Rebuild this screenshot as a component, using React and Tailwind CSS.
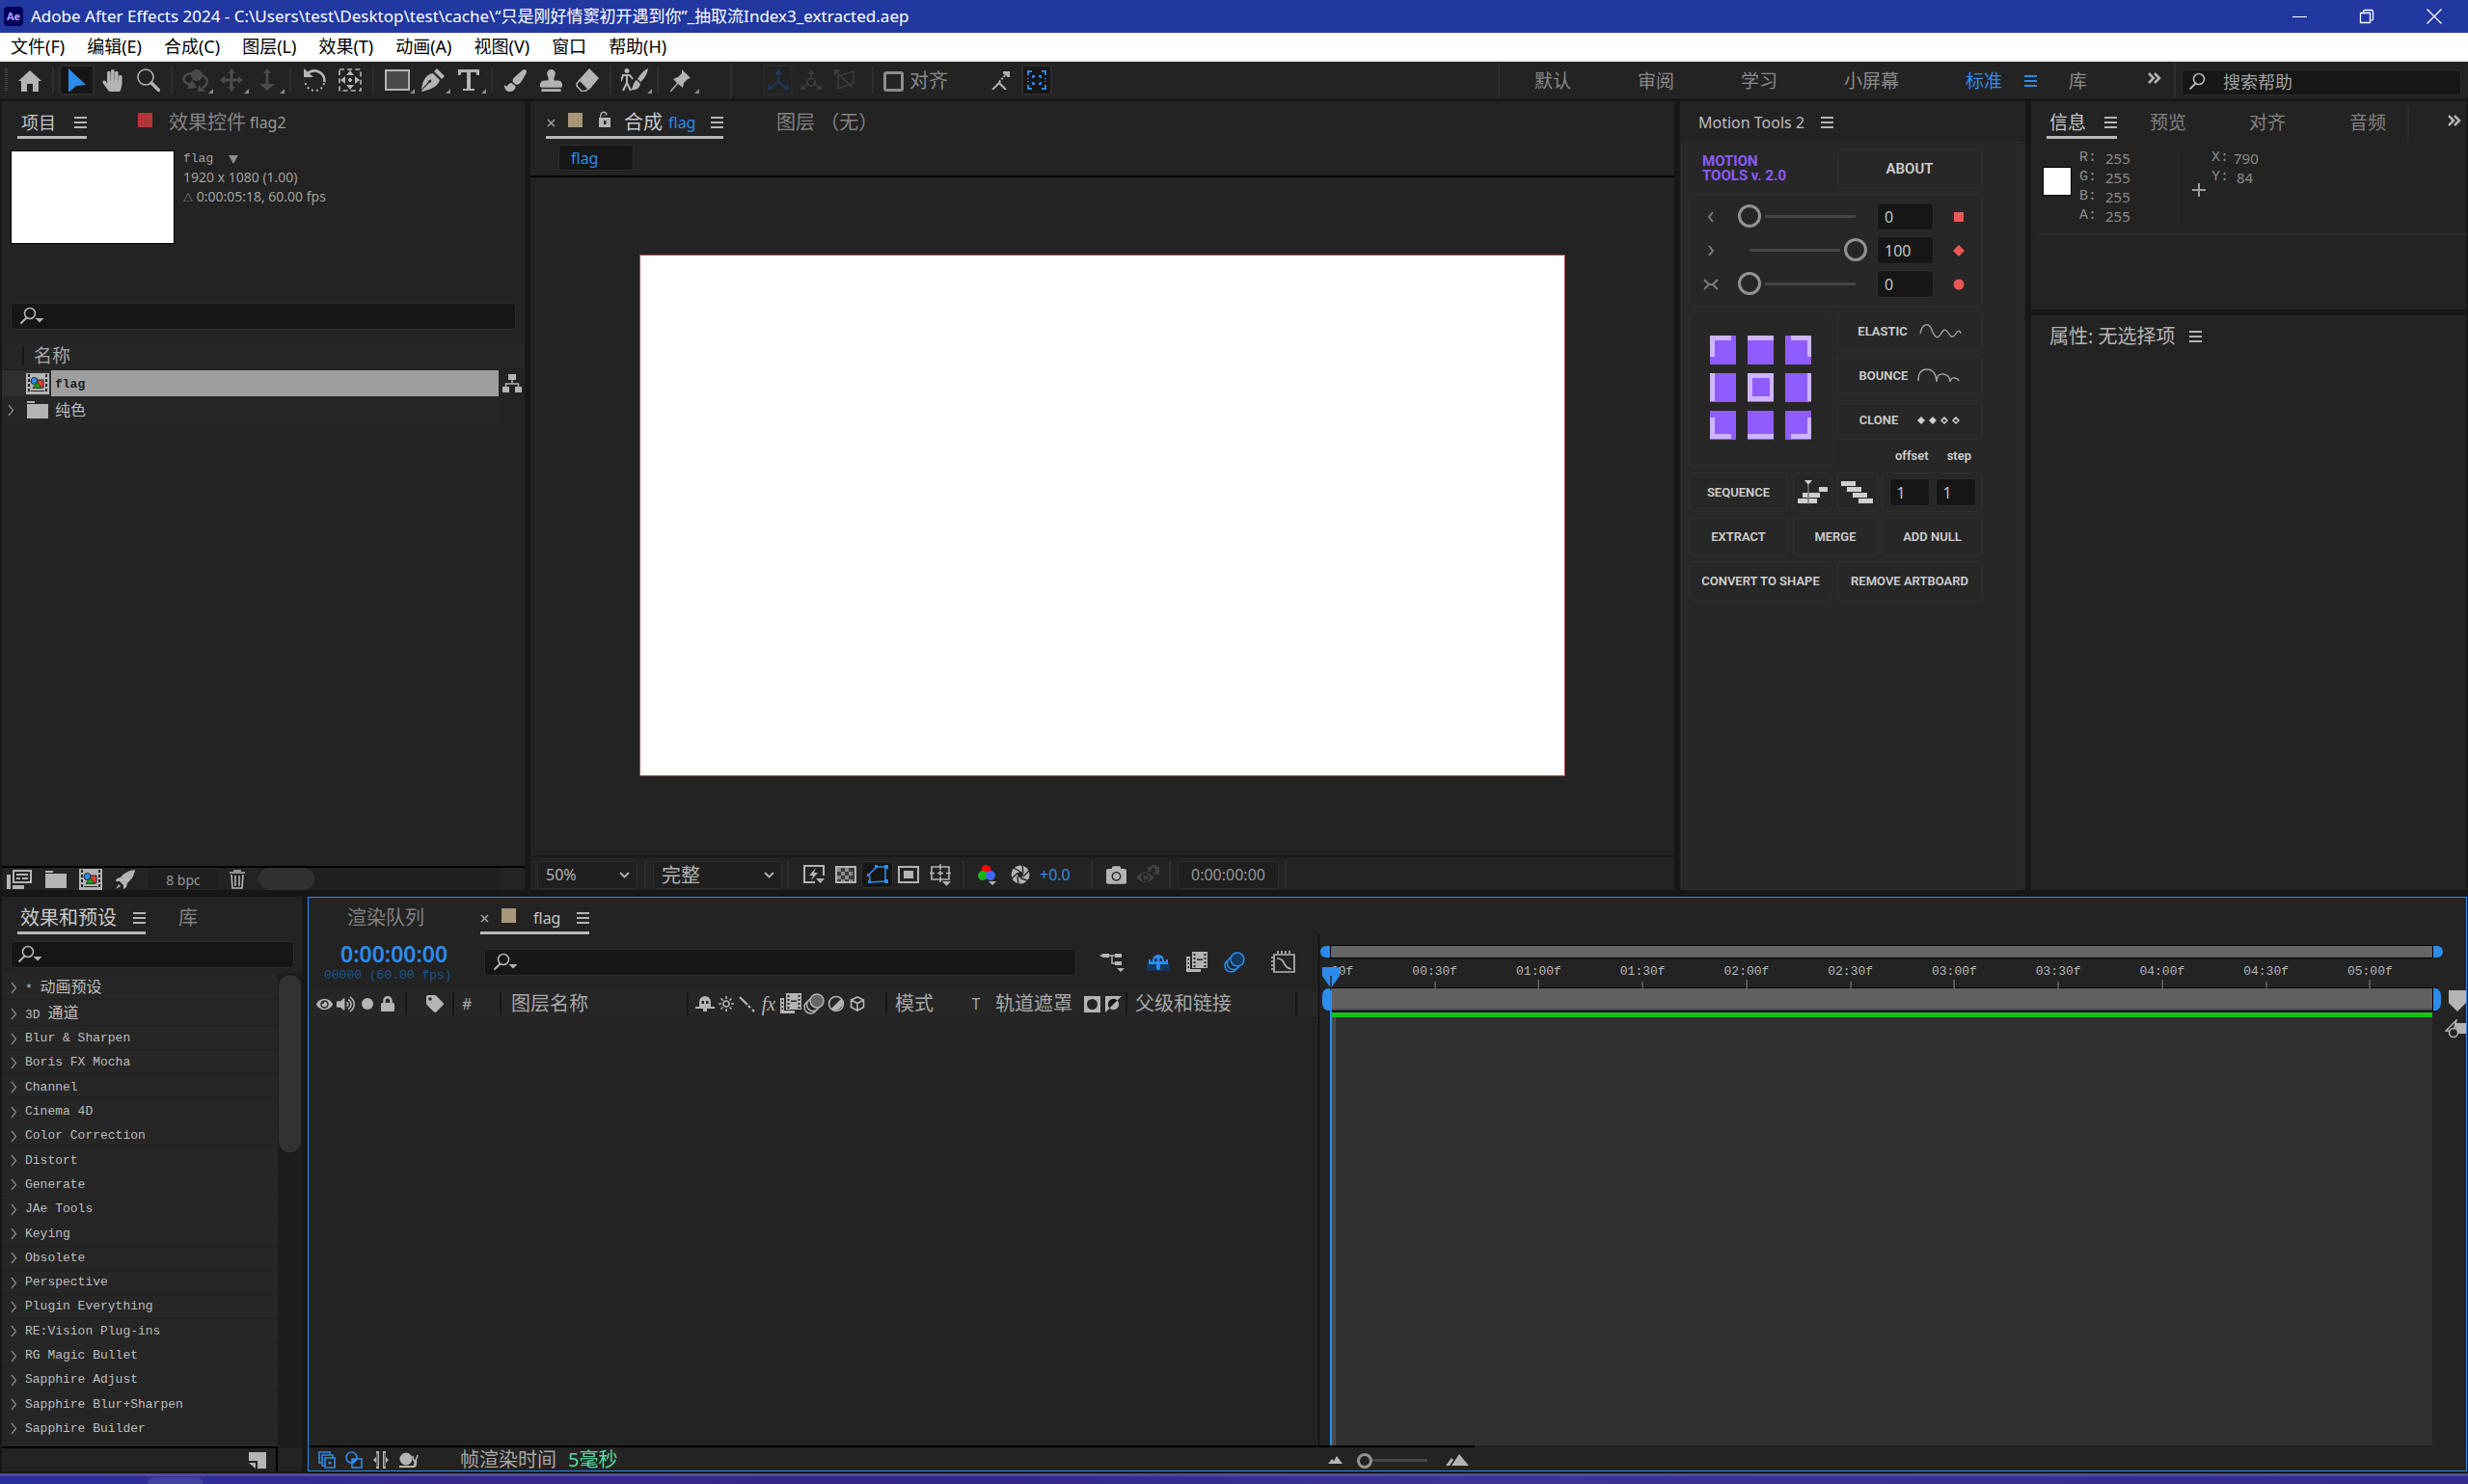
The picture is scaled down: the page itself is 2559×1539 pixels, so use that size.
import React from 'react';
import { FaHandPaper, FaStamp, FaPaintBrush, FaCamera, FaLock, FaTag, FaVolumeUp, FaEye } from 'react-icons/fa';

const Svg = ({ w = 24, h = 24, className = "", children }) => (
    <svg width={w} height={h} viewBox={`0 0 ${w} ${h}`} className={`shrink-0 ${className}`} fill="currentColor" aria-hidden="true">
        {children}
    </svg>
);

const Lines = ({ className = "text-[#b4b4b4]" }) => (
    <Svg w={13} h={12} className={className}>
        <path d="M0 0h13v2H0zM0 5h13v2H0zM0 10h13v2H0z" />
    </Svg>
);

const Chevrons = () => (
    <Svg w={16} h={14} className="text-[#b4b4b4]">
        <path d="M2 2l5 5-5 5M8 2l5 5-5 5" fill="none" stroke="currentColor" strokeWidth="2.5" />
    </Svg>
);

const Caret = () => (
    <Svg w={7} h={13} className="text-[#8c8c8c]">
        <path d="M1 1l4.500 5.500L1 12" fill="none" stroke="currentColor" strokeWidth="1.200" />
    </Svg>
);

const SearchIcon = ({ arrow = true }) => (
    <Svg w={26} h={20} className="text-[#b4b4b4]">
        <circle cx="11" cy="7" r="5.500" fill="none" stroke="currentColor" strokeWidth="1.600" />
        <path d="M7.500 11.500L1.500 17.500" stroke="currentColor" strokeWidth="2" />
        {arrow && <path d="M16.500 12h9l-4.500 4.500z" />}
    </Svg>
);

const CompIcon = () => (
    <Svg w={24} h={22}>
        <path d="M0 0h24v22H0z" fill="#b4b4b4" />
        <path d="M2 1h2v3H2zM2 6h2v3H2zM2 11h2v3H2zM2 16h2v3H2zM20 1h2v3h-2zM20 6h2v3h-2zM20 11h2v3h-2zM20 16h2v3h-2zM5 18h14v1H5z" fill="#232323" />
        <path d="M11 7h7v8h-7z" fill="#f23b3b" stroke="#232323" />
        <circle cx="8.500" cy="8" r="3.500" fill="#2d8ceb" stroke="#232323" />
        <path d="M11.500 8.500l4.500 7H7z" fill="#129c12" stroke="#232323" strokeWidth=".8" />
    </Svg>
);

const FolderIcon = () => (
    <Svg w={22} h={18} className="text-[#b4b4b4]">
        <path d="M0 0h8v2H0zM0 3h22v15H0z" />
    </Svg>
);

const Film = () => (
    <Svg w={22} h={22}>
        <path d="M6 0h16v17H6zM0 5h4v13h11v3H0z" />
        <path d="M7.500 2h2v2h-2zM7.500 6h2v2h-2zM7.500 10h2v2h-2zM7.500 14h2v2h-2zM18.500 2h2v2h-2zM18.500 6h2v2h-2zM18.500 10h2v2h-2zM18.500 14h2v2h-2zM11 7.500h6v1.500h-6zM1.500 7H3v2H1.500zM1.500 11H3v2H1.500zM1.500 15H3v2H1.500z" fill="#232323" />
    </Svg>
);

const Blur = ({ fill = "#666" }) => (
    <Svg w={22} h={22}>
        <g fill="#232323" stroke="currentColor" strokeWidth="1.500">
            <circle cx="7.500" cy="14.500" r="6.500" />
            <circle cx="10" cy="12" r="6.500" />
            <circle cx="14" cy="8" r="7" fill={fill} />
        </g>
    </Svg>
);

const Shy = () => (
    <Svg w={24} h={18}>
        <path d="M6 7a6 6 0 0 1 12 0v1H6zM2 6h2v2h16V6h2v5h-8v5q-2 2-4 0v-5H2z" />
        <path d="M8 5h2.500v3H8zM13.500 5H16v3h-2.500z" fill="#1b2a3c" />
    </Svg>
);

const toolGroups = [
    [
        { name: 'Home', icon: <Svg><path d="M12 2L0 13h3v11h6v-8h6v8h6V13h3z" /></Svg> },
    ],
    [
        { name: 'Selection', active: true, icon: <Svg className="text-[#2d8ceb]"><path d="M3 0l18 17-10 1-8 7z" /></Svg> },
        { name: 'Hand', icon: <FaHandPaper size={23} /> },
        {
            name: 'Zoom', icon: (
                <Svg>
                    <circle cx="9" cy="9" r="8" fill="none" stroke="currentColor" strokeWidth="1.500" />
                    <path d="M15 15l7.500 7.500" stroke="currentColor" strokeWidth="3.500" strokeLinecap="round" />
                </Svg>
            )
        },
    ],
    [
        {
            name: 'Orbit', dim: true, sub: true, icon: (
                <Svg w={28}>
                    <circle cx="15" cy="7" r="6" />
                    <path d="M10 5C0 6-1 13 6 16l5 2M20 7c8 3 7 10 1 13" fill="none" stroke="currentColor" strokeWidth="2.500" />
                    <path d="M5 21l10-1-5-8zM24 24h-8l1-7z" />
                </Svg>
            )
        },
        { name: 'Pan', dim: true, sub: true, icon: <Svg><path d="M12 0l4 5h-2.500v5.500H19V8l5 4-5 4v-2.500h-5.500V19H16l-4 5-4-5h2.500v-5.500H5V16l-5-4 5-4v2.500h5.500V5H8z" /></Svg> },
        { name: 'Dolly', dim: true, sub: true, icon: <Svg w={16}><path d="M8 0l4 5H9.500v11H16l-8 7-8-7h6.500V5H4z" /></Svg> },
    ],
    [
        {
            name: 'Rotate', icon: (
                <Svg>
                    <path d="M4 6C11-1 23 3 22.500 14" fill="none" stroke="currentColor" strokeWidth="2.500" />
                    <path d="M1 0v9h10z" />
                    <path d="M22 15C20 26 3 26 2 12" fill="none" stroke="currentColor" strokeWidth="2" strokeDasharray="2 3" />
                </Svg>
            )
        },
        {
            name: 'Anchor', icon: (
                <Svg>
                    <path d="M1 1h22v22H1z" fill="none" stroke="currentColor" strokeWidth="1.600" strokeDasharray="5 3.200" />
                    <path d="M12 2l4 5H8zM12 22l4-5H8zM2 12l5-4v8zM22 12l-5-4v8z" />
                    <path d="M10 11h1v-1h2v1h1v2h-1v1h-2v-1h-1z" />
                </Svg>
            )
        },
    ],
    [
        { name: 'Rectangle', sub: true, icon: <Svg w={26}><path d="M1 2h24v20H1z" fill="#4a4a4a" stroke="#b4b4b4" strokeWidth="2" /></Svg> },
        {
            name: 'Pen', sub: true, icon: (
                <Svg>
                    <path d="M16 0l8 8-3 3-8-8zM12 5l7 7c-2 6-7 9-18 12l-1-1L8 15c1 0 3-1 2-3-2-1-3 1-3 2L0 22C1 12 5 6 12 5z" />
                </Svg>
            )
        },
        { name: 'Text', sub: true, icon: <Svg w={22}><path d="M0 1h22v6h-2.500l-1-3H13v17h4v2H5v-2h4V4H3.500l-1 3H0z" /></Svg> },
    ],
    [
        { name: 'Brush', icon: <FaPaintBrush size={23} /> },
        { name: 'Stamp', icon: <FaStamp size={23} /> },
        {
            name: 'Eraser', icon: (
                <Svg>
                    <path d="M14 0l10 10-10 12L4 11z" />
                    <path d="M4 12l9 9-3 2.500H6L1 18v-2z" fill="none" stroke="currentColor" strokeWidth="1.500" />
                </Svg>
            )
        },
    ],
    [
        {
            name: 'Roto', sub: true, icon: (
                <Svg w={28}>
                    <circle cx="6" cy="2.500" r="2.500" />
                    <path d="M6 6v9l-4 8M6 15l4 8M0 13l2-6h7l3 4" fill="none" stroke="currentColor" strokeWidth="2" />
                    <path d="M28 0c-1 6-4 11-8 14l-3-3c3-5 6-9 11-11zM16 12l4 4c-1 5-5 7-10 6 3-2 2-8 6-10z" />
                </Svg>
            )
        },
    ],
    [
        { name: 'Puppet pin', sub: true, icon: <Svg><path d="M12 1l9 9-3 1-4 4-1 5-5-4-7 8H0v-1l7-8-4-4 5-2 4-4z" /></Svg> },
    ],
];

const Sep = ({ className = "" }) => <div className={`w-[2px] h-7 bg-[#2e2e2e] shrink-0 ${className}`}></div>;

const menus = ['文件(F)', '编辑(E)', '合成(C)', '图层(L)', '效果(T)', '动画(A)', '视图(V)', '窗口', '帮助(H)'];

const TitleBar = () => (
    <header>
        <div className="h-[34px] bg-[#2038a0] flex items-center text-white">
            <div className="w-5 h-5 ml-1 rounded bg-[#00005b] text-[#b3a0ff] text-[11px] font-bold flex items-center justify-center">Ae</div>
            <h1 className="ml-2 text-[17px] leading-6 flex-1 whitespace-nowrap">Adobe After Effects 2024 - C:\Users\test\Desktop\test\cache\“只是刚好情窦初开遇到你”_抽取流Index3_extracted.aep</h1>
            <div className="flex">
                <button aria-label="Minimize" className="w-[70px] h-8 flex items-center justify-center">
                    <Svg w={15} h={15}><path d="M0 7h15v1H0z" /></Svg>
                </button>
                <button aria-label="Restore" className="w-[70px] h-8 flex items-center justify-center">
                    <Svg w={16} h={16}>
                        <path d="M1.500 4.500h10v10h-10zM4.500 4.500V3q0-1.500 1.500-1.500h7q1.500 0 1.500 1.500v8q0 1-2 1" fill="none" stroke="currentColor" strokeWidth="1.300" />
                    </Svg>
                </button>
                <button aria-label="Close" className="w-[70px] h-8 flex items-center justify-center">
                    <Svg w={16} h={16}><path d="M.5.500l15 15M15.500.500l-15 15" stroke="currentColor" strokeWidth="1.300" /></Svg>
                </button>
            </div>
        </div>
        <nav className="h-[30px] bg-white border-b-2 border-[#efefef] flex items-center gap-[23px] pl-[11px] text-lg leading-6 text-black">
            {menus.map((m) => <button key={m} className="whitespace-nowrap">{m}</button>)}
        </nav>
    </header>
);

const Toolbar = () => (
    <div className="h-[38px] bg-[#232323] flex items-center text-[#b4b4b4]">
        <div className="w-[3px] h-6 ml-[5px] mr-1 bg-[repeating-linear-gradient(#4a4a4a_0_1px,transparent_1px_2px)]"></div>
        {toolGroups.map((group, i) => (
            <React.Fragment key={i}>
                {i > 0 && <Sep className="mx-[5px]" />}
                {group.map((t) => (
                    <button
                        key={t.name}
                        aria-label={t.name}
                        className={`relative w-[37px] h-8 shrink-0 flex items-center justify-center rounded ${t.active ? "bg-[#161616] border-2 border-[#2c2c2c]" : ""} ${t.dim ? "text-[#4b4b4b]" : ""}`}
                    >
                        {t.icon}
                        {t.sub && <Svg w={5} h={5} className="absolute right-0 bottom-0.5 text-[#8c8c8c]"><path d="M5 0v5H0z" /></Svg>}
                    </button>
                ))}
            </React.Fragment>
        ))}
        <Sep className="ml-8 h-[38px]" />
        <div className="flex items-center ml-8 text-[#3c3c3c]">
            <button aria-label="Local axis" className="w-[31px] h-8 border-2 border-[#292929] rounded flex items-center justify-center text-[#1e3a5c]">
                <Svg w={22} h={22}><path d="M11 3v10L2 20M11 13l9 7" fill="none" stroke="currentColor" strokeWidth="1.800" /><path d="M11 0l4 5H7zM0 21l1-6 5 6zM22 21l-1-6-5 6z" /></Svg>
            </button>
            <button aria-label="World axis" className="w-[37px] h-8 flex items-center justify-center">
                <Svg w={22} h={22}><path d="M11 3v7M8 15l-6 4M14 15l6 4" fill="none" stroke="currentColor" strokeWidth="1.800" /><circle cx="11" cy="13" r="4" fill="none" stroke="currentColor" strokeWidth="1.800" /><path d="M11 0l4 5H7zM0 21l1-6 5 6zM22 21l-1-6-5 6z" /></Svg>
            </button>
            <button aria-label="View axis" className="w-[33px] h-8 flex items-center justify-center">
                <Svg w={22} h={22}><path d="M4 7l16-5v12L4 20zM2 2l17 17" fill="none" stroke="currentColor" strokeWidth="1.600" /><path d="M0 0h7L0 7z" /></Svg>
            </button>
        </div>
        <Sep className="ml-3 mr-2.5" />
        <label className="flex items-center gap-1.5 pt-0.5 text-xl leading-6 text-[#8a8a8a]">
            <input type="checkbox" className="appearance-none w-[21px] h-[21px] border-[3px] border-[#8c8c8c] rounded-[3px]" />
            对齐
        </label>
        <button aria-label="Snap edges" className="ml-[38px] w-[34px] h-8 flex items-center justify-center">
            <Svg w={20} h={20}><path d="M1 20l7-7 7 7" fill="none" stroke="currentColor" strokeWidth="2" /><path d="M8 12l8-9" stroke="currentColor" strokeWidth="2" strokeDasharray="2 1.500" /><path d="M12 1h7v6h-2l-5-4z" /></Svg>
        </button>
        <button aria-label="Snap features" className="ml-1 w-8 h-8 rounded bg-[#161616] border-2 border-[#2c2c2c] flex items-center justify-center text-[#2d8ceb]">
            <Svg w={20} h={20}><path d="M1 5V1h4M15 1h4v4M19 15v4h-4M5 19H1v-4" fill="none" stroke="currentColor" strokeWidth="1.800" /><path d="M1 8v1M1 11v1M19 8v1M19 11v1M6 8V6h2M12 6h2v2M14 12v2h-2M8 14H6v-2" fill="none" stroke="currentColor" strokeWidth="1.800" /></Svg>
        </button>
        <div className="ml-auto flex items-center text-[19px] leading-6 text-[#8a8a8a]">
            <Sep className="h-[38px] mr-9" />
            <div className="flex items-center gap-[69px] pt-0.5">
                <button>默认</button>
                <button>审阅</button>
                <button>学习</button>
                <button>小屏幕</button>
                <button className="text-[#2d8ceb] -mr-[46px]">标准</button>
                <Lines className="text-[#2d8ceb]" />
                <button className="-ml-9">库</button>
            </div>
            <button aria-label="More workspaces" className="ml-[62px] -mt-1"><Chevrons /></button>
            <Sep className="h-[38px] ml-3 mr-1.5" />
            <div className="w-[290px] h-[27px] mr-[7px] mt-1 rounded bg-[#161616] border border-[#2c2c2c] flex items-center pl-1.5">
                <SearchIcon arrow={false} />
                <input aria-label="搜索帮助" placeholder="搜索帮助" className="ml-2.5 flex-1 min-w-0 bg-transparent text-lg leading-6 placeholder:text-[#a0a0a0] outline-none" />
            </div>
        </div>
    </div>
);

const Tab = ({ active, className = "", children }) => (
    <button className={`h-[39px] pt-2 border-b-[3px] flex items-center whitespace-nowrap ${active ? "border-[#b9b9b9] text-[#c8c8c8]" : "border-transparent text-[#828282]"} ${className}`}>
        {children}
    </button>
);

const ProjectPanel = () => (
    <section className="w-[542px] shrink-0 bg-[#232323] flex flex-col">
        <div className="flex pl-4 text-xl leading-6">
            <Tab active className="w-[72px] pl-1 text-lg">项目<Lines className="ml-auto text-[#b4b4b4]" /></Tab>
            <Tab className="ml-[53px]">
                <span className="w-[15px] h-[15px] -mt-1.5 mr-[17px] bg-[#b23737]"></span>
                效果控件<span className="ml-1 text-base leading-6 text-[#9a9a9a]">flag2</span>
            </Tab>
        </div>
        <div className="flex mt-3 ml-[9px]">
            <div className="w-[170px] h-[97px] bg-white border border-black"></div>
            <div className="ml-[9px] text-sm leading-5 text-[#a0a0a0]">
                <div className="h-[18px] flex items-center gap-4 text-[13px] font-[Liberation_Mono]">
                    flag
                    <Svg w={10} h={9} className="text-[#8c8c8c]"><path d="M0 0h10L5 9z" /></Svg>
                </div>
                <div>1920 x 1080 (1.00)</div>
                <div><span className="text-[10px]">△</span> 0:00:05:18, 60.00 fps</div>
            </div>
        </div>
        <label className="mt-[61px] mx-[9px] h-7 rounded bg-[#161616] border border-[#2c2c2c] flex items-center pl-2">
            <SearchIcon />
            <input aria-label="Search project" className="flex-1 bg-transparent outline-none" />
        </label>
        <table className="mt-3 w-full text-left">
            <thead>
                <tr className="bg-[#262626] h-7 border-y-2 border-[#212121]">
                    <th colSpan="3" className="p-0 font-normal text-[19px] leading-6 text-[#a8a8a8]">
                        <div className="ml-[21px] pl-2.5 border-l-2 border-[#161616] h-5 flex items-center">名称</div>
                    </th>
                </tr>
            </thead>
            <tbody>
                <tr className="h-7">
                    <td className="p-0 w-[51px] bg-[#2f2f2f]"><div className="pl-[25px] flex"><CompIcon /></div></td>
                    <td className="p-0 pl-1 pt-0.5 bg-[#9e9e9e] text-[#1a1a1a] font-bold text-[13px] font-[Liberation_Mono]">flag</td>
                    <td className="p-0 w-[27px] text-[#b4b4b4]">
                        <Svg w={20} h={20} className="mx-auto"><path d="M6 0h8v6H6zM0 13h7v6H0zM13 13h7v6h-7z" /><path d="M10 6v4M3.500 13v-3h13v3" fill="none" stroke="currentColor" strokeWidth="1.500" /></Svg>
                    </td>
                </tr>
                <tr className="h-7 bg-[#262626]">
                    <td className="p-0"><div className="pl-1.5 flex items-center gap-[13px]"><Caret /><FolderIcon /></div></td>
                    <td className="p-0 pl-1 text-base leading-5 text-[#bdbdbd]">纯色</td>
                    <td className="bg-[#232323]"></td>
                </tr>
            </tbody>
        </table>
        <div className="mt-auto h-[25px] border-t-2 border-black flex items-center text-[#b4b4b4]">
            <button aria-label="Interpret footage" className="ml-[5px]">
                <Svg w={26} h={20}><path d="M7 1h18v12H7z" fill="none" stroke="currentColor" strokeWidth="2" /><path d="M10 4h12v2H10zM10 8h4v2h-4zM16 8h6v2h-6zM0 5h4v15H0zM6 16h12v4H6z" /></Svg>
            </button>
            <button aria-label="New folder" className="ml-3.5"><FolderIcon /></button>
            <button aria-label="New composition" className="ml-[13px]"><CompIcon /></button>
            <button aria-label="Project settings" className="ml-3.5">
                <Svg w={20} h={20}><path d="M20 0c-8 1-12 4-15 8L1 9l-1 3h4l4 4v4l3-2 1-4c4-4 7-7 8-14zM3 15l-3 5 5-3z" /></Svg>
            </button>
            <button className="ml-3 w-[76px] h-[23px] pt-0.5 rounded border border-[#2a2a2a] bg-[#1f1f1f] text-sm leading-5 text-[#969696]">8 bpc</button>
            <button aria-label="Delete" className="ml-2.5">
                <Svg w={16} h={20}><path d="M0 3h16M5 2V1h6v1M2 5l1 14h10l1-14M6 6v11M10 6v11" fill="none" stroke="currentColor" strokeWidth="1.600" /></Svg>
            </button>
            <div className="ml-3.5 w-[250px] h-full bg-[#1f1f1f]"><div className="w-[58px] h-full rounded-full bg-[#313131]"></div></div>
        </div>
    </section>
);

const SelectBox = ({ label, value, className = "" }) => (
    <div className={`relative h-[29px] flex items-center ${className}`}>
        <select aria-label={label} className="appearance-none w-full h-full pl-2 rounded bg-[#1f1f1f] border border-[#2e2e2e] text-[#b4b4b4] outline-none">
            <option>{value}</option>
        </select>
        <Svg w={11} h={7} className="absolute right-2 text-[#b4b4b4] pointer-events-none"><path d="M1 1l4.500 4.500L10 1" fill="none" stroke="currentColor" strokeWidth="1.800" /></Svg>
    </div>
);

const CompPanel = () => (
    <section className="flex-1 min-w-0 bg-[#232323] flex flex-col">
        <div className="flex pl-4 text-xl leading-6">
            <Tab active className="w-[184px]">
                <Svg w={9} h={9} className="ml-px text-[#a0a0a0]"><path d="M1 1l7 7M8 1L1 8" stroke="currentColor" strokeWidth="1.500" /></Svg>
                <span className="w-[15px] h-[15px] -mt-1.5 ml-[13px] bg-[#a89678]"></span>
                <Svg w={14} h={18} className="-mt-1.5 ml-4 text-[#b4b4b4]"><path d="M1 7h12v10H1zM2 7V5q0-4 4-4.500Q10 1 9.500 4" /><path d="M3.500 7V5q0-3 2.500-3t2 2.500h-2V7zM6 10h2.500v4H6z" fill="#232323" /></Svg>
                <span className="ml-[13px]">合成</span>
                <span className="ml-1.5 text-base leading-6 text-[#2d8ceb]">flag</span>
                <Lines className="ml-auto text-[#b4b4b4]" />
            </Tab>
            <Tab className="ml-[55px]">图层 （无）</Tab>
        </div>
        <div className="h-10 border-b-2 border-black pl-[29px] pt-1.5">
            <button className="w-[78px] h-[27px] pl-3 text-left rounded bg-[#161616] border border-[#2c2c2c] text-base leading-6 text-[#2d8ceb]">flag</button>
        </div>
        <div className="flex-1 min-h-0 flex items-center justify-center pb-0.5">
            <div className="w-[81%] aspect-video bg-white border border-[#b04a4a]"></div>
        </div>
        <div className="h-9 pt-0.5 border-t-2 border-[#1a1a1a] flex items-center pl-[7px] text-[#b4b4b4]">
            <SelectBox label="Magnification" value="50%" className="w-[104px] text-base" />
            <Sep className="h-6 mx-[7px]" />
            <SelectBox label="Resolution" value="完整" className="w-[134px] text-xl" />
            <Sep className="h-6 mx-[5px]" />
            <div className="flex items-center gap-[11px] ml-2.5">
                <button aria-label="Fast previews">
                    <Svg w={22} h={20}><path d="M12 18H1V1h20v10" fill="none" stroke="currentColor" strokeWidth="2" /><path d="M13 3L6 11h4l-2 5 7-8h-4zM13 14h9l-4.500 5z" /></Svg>
                </button>
                <button aria-label="Transparency grid">
                    <Svg w={22} h={18}><path d="M1 1h20v16H1z" fill="#3c3c3c" stroke="currentColor" strokeWidth="2" /><path d="M2 2h4v4H2zM10 2h4v4h-4zM6 6h4v4H6zM14 6h4v4h-4zM2 10h4v4H2zM10 10h4v4h-4zM6 14h4v2H6zM14 14h4v2h-4z" fill="#8a8a8a" /></Svg>
                </button>
                <button aria-label="Mask visibility" className="w-[33px] h-7 -mx-1.5 rounded bg-[#161616] border border-[#303030] flex items-center justify-center text-[#2d8ceb]">
                    <Svg w={22} h={20}><path d="M3 18q0-8-1-8 4-4 8-8h9v15z" fill="none" stroke="currentColor" strokeWidth="1.600" /><path d="M1 16h3v3H1zM0 9h3v3H0zM8 0h3v3H8zM18 0h4v4h-4zM18 15h4v4h-4z" /></Svg>
                </button>
                <button aria-label="Region of interest">
                    <Svg w={22} h={18}><path d="M1 1h20v16H1z" fill="none" stroke="currentColor" strokeWidth="2" /><path d="M6 5h10v8H6z" /></Svg>
                </button>
                <button aria-label="Guides">
                    <Svg w={22} h={23}><path d="M2 3h18v13H2zM11 0v6M11 13v6M0 9.500h5M17 9.500h5M8 9.500h6M11 7v5" fill="none" stroke="currentColor" strokeWidth="1.600" /><path d="M13 18h9l-4.500 5z" fill="#b4b4b4" /></Svg>
                </button>
            </div>
            <Sep className="h-6 ml-3 mr-3.5" />
            <button aria-label="Channels">
                <Svg w={20} h={22}><circle cx="8.500" cy="6" r="5" fill="#f00" /><circle cx="5" cy="12" r="5" fill="#16b616" /><circle cx="13" cy="12" r="5" fill="#4169ff" /><path d="M11 18h8l-4 4z" fill="#b4b4b4" /></Svg>
            </button>
            <button aria-label="Reset exposure" className="ml-3.5">
                <Svg w={20} h={20}><circle cx="10" cy="10" r="9.500" /><circle cx="10" cy="10" r="3" fill="#232323" /><path d="M10 7L3 3M13 8.500L12 0M13 12l6-6M10 13.500l8 3M7 12l1 8M7 8.500L1 14" stroke="#232323" strokeWidth="1.400" /></Svg>
            </button>
            <span className="ml-2.5 w-12 text-base leading-6 text-[#2d8ceb]">+0.0</span>
            <Sep className="h-6 ml-[5px] mr-3.5" />
            <button aria-label="Snapshot"><FaCamera size={21} /></button>
            <button aria-label="Show snapshot" className="ml-2.5 text-[#404040]">
                <Svg w={24} h={20}><path d="M0 13q9-11 19 0-9 10-19 0zM12 2h3l1-2h5l1 2h2v8h-5l-3-3h-4z" /><circle cx="9.500" cy="13" r="4.500" fill="#232323" /><circle cx="10" cy="13" r="2.500" /><circle cx="18" cy="5.500" r="2.500" fill="#232323" /></Svg>
            </button>
            <Sep className="h-6 ml-2.5 mr-[7px]" />
            <button className="w-[105px] h-[29px] rounded bg-[#1f1f1f] border border-[#2e2e2e] text-base leading-6 text-[#969696]">0:00:00:00</button>
            <Sep className="h-6 ml-1.5" />
        </div>
    </section>
);

const sliders = [
    { name: 'Ease in', value: 0, path: 'M10 1L6 6l4 5', mark: <path d="M2 2h10v10H2z" /> },
    { name: 'Ease out', value: 100, path: 'M6 1l4 5-4 5', mark: <path d="M7 1l6 6-6 6-6-6z" /> },
    { name: 'Ease both', value: 0, path: 'M1 1l5 5-5 5M15 1l-5 5 5 5M5 6h6', mark: <circle cx="7" cy="7" r="5.500" /> },
];

// highlighted edge of each anchor square
const anchors = [
    'M0 0h22v5H5v17H0z', 'M0 0h27v5H0z', 'M27 0H6v5h17v17h4z',
    'M0 0h5v29H0z', 'M0 0h27v29H0zM5 5v19h18V5z', 'M23 0h4v29h-4z',
    'M0 29h22v-5H5V7H0z', 'M0 24h27v5H0z', 'M27 29H6v-5h17V7h4z',
];

const MtButton = ({ className = "", children }) => (
    <button className={`h-[41px] rounded-sm border border-[#2e2e2e] flex items-center justify-center ${className}`}>{children}</button>
);

const MtInput = ({ label, value, className = "" }) => (
    <input aria-label={label} defaultValue={value} className={`h-[29px] rounded bg-[#161616] border border-[#2c2c2c] pl-[7px] font-[Noto_Sans] font-normal text-base text-[#c4c4c4] outline-none ${className}`} />
);

const MotionPanel = () => (
    <section className="w-[358px] shrink-0 bg-[#232323] flex flex-col">
        <div className="flex pl-[19px] text-base leading-6">
            <Tab className="text-[#bdbdbd]">Motion Tools 2<Lines className="ml-[17px] text-[#b4b4b4]" /></Tab>
        </div>
        <div className="flex-1 mt-[3px] mx-px bg-[#272727] border border-[#2e2e2e] rounded-sm pl-[7px] pt-[7px] font-[Roboto] font-semibold text-[13px] text-[#cfcfcf]">
            <div className="w-[304px] flex flex-col gap-[5px]">
                <div className="flex justify-between">
                    <div className="pl-3.5 pt-[5px] text-[15px] leading-[15px] font-bold text-[#8a5cf6]">MOTION<br />TOOLS v. 2.0</div>
                    <MtButton className="w-[150px] text-[15px]">ABOUT</MtButton>
                </div>
                <div className="h-[117px] rounded-sm border border-[#2e2e2e] pt-2 flex flex-col gap-1.5">
                    {sliders.map((s) => (
                        <div key={s.name} className="flex items-center">
                            <Svg w={16} h={12} className="ml-3.5 text-[#7c7c7c]"><path d={s.path} fill="none" stroke="currentColor" strokeWidth="2" /></Svg>
                            <input
                                type="range"
                                aria-label={s.name}
                                defaultValue={s.value}
                                className="ml-5 w-[134px] h-6 appearance-none bg-transparent [&::-webkit-slider-runnable-track]:h-[3px] [&::-webkit-slider-runnable-track]:bg-[linear-gradient(to_right,transparent_12px,#454545_12px,#454545_122px,transparent_122px)] [&::-webkit-slider-thumb]:appearance-none [&::-webkit-slider-thumb]:w-6 [&::-webkit-slider-thumb]:h-6 [&::-webkit-slider-thumb]:-mt-[11px] [&::-webkit-slider-thumb]:rounded-full [&::-webkit-slider-thumb]:border-[3px] [&::-webkit-slider-thumb]:border-[#929292] [&::-webkit-slider-thumb]:bg-[#272727] [&::-webkit-slider-thumb]:shadow-[0_0_0_4px_#272727]"
                            />
                            <MtInput label={`${s.name} value`} value={s.value} className="ml-2.5 w-[59px]" />
                            <Svg w={14} h={14} className="ml-[19px] text-[#eb5757]">{s.mark}</Svg>
                        </div>
                    ))}
                </div>
                <div className="flex gap-[5px]">
                    <div className="w-[149px] h-[162px] pb-1 rounded-sm border border-[#2e2e2e] grid grid-cols-[27px_27px_27px] gap-x-3 gap-y-[9px] justify-center content-center">
                        {anchors.map((a, i) => (
                            <button key={i} aria-label={`Anchor ${i + 1}`} className="h-[30px] bg-[#8f5cff]">
                                <Svg w={27} h={30} className="text-[#cdb6ff]"><path d={a} fillRule="evenodd" /></Svg>
                            </button>
                        ))}
                    </div>
                    <div className="flex-1 flex flex-col gap-[5px]">
                        <MtButton className="gap-3">
                            ELASTIC
                            <Svg w={44} h={16}><path d="M1 10C3-1 10-2 13 6s6 10 9 5 5-7 8-2 5 6 8 1 5-2 5 0" fill="none" stroke="#a0a0a0" strokeWidth="1.400" /></Svg>
                        </MtButton>
                        <MtButton className="gap-2.5">
                            BOUNCE
                            <Svg w={44} h={16}><path d="M1 13Q1 1 10 1t10 13q0-9 7-8t7 8q1-5 5-4t4 3" fill="none" stroke="#a0a0a0" strokeWidth="1.400" /></Svg>
                        </MtButton>
                        <MtButton className="gap-5">
                            CLONE
                            <Svg w={44} h={10}><path d="M4 1l4 4-4 4-4-4zM16 1l4 4-4 4-4-4z" /><path d="M28 2l3 3-3 3-3-3zM40 2l3 3-3 3-3-3z" fill="none" stroke="currentColor" strokeWidth="1.500" /></Svg>
                        </MtButton>
                        <div className="h-6 flex items-center justify-end gap-[19px] pr-[11px]"><span>offset</span><span>step</span></div>
                    </div>
                </div>
                <div className="flex gap-[5px]">
                    <MtButton className="w-[103px]">SEQUENCE</MtButton>
                    <MtButton className="w-[41px]">
                        <Svg w={32} h={26}><path d="M7 0h8l-4 5zM22 7h9v5h-9zM5 13h18v5H5zM0 19h20v5H0z" /><path d="M11 5v20" stroke="#777" strokeWidth="1.500" /></Svg>
                    </MtButton>
                    <MtButton className="w-[42px]">
                        <Svg w={34} h={26}><path d="M0 1h15v5H0zM6 7h15v5H6zM12 13h15v5H12zM18 19h15v5H18z" /></Svg>
                    </MtButton>
                    <div className="w-[103px] rounded-sm border border-[#2e2e2e] flex items-center justify-center gap-1.5">
                        <MtInput label="offset" value="1" className="w-[42px]" />
                        <MtInput label="step" value="1" className="w-[42px]" />
                    </div>
                </div>
                <div className="flex gap-[5px]">
                    <MtButton className="w-[103px]">EXTRACT</MtButton>
                    <MtButton className="w-[88px]">MERGE</MtButton>
                    <MtButton className="w-[103px]">ADD NULL</MtButton>
                </div>
                <div className="flex gap-[5px]">
                    <MtButton className="w-[149px]">CONVERT TO SHAPE</MtButton>
                    <MtButton className="w-[150px]">REMOVE ARTBOARD</MtButton>
                </div>
            </div>
        </div>
    </section>
);

const Reading = ({ name, value }) => (
    <div className="flex"><span className="w-[27px] font-[Liberation_Mono]">{name}:</span>{value}</div>
);

const InfoColumn = () => (
    <div className="w-[451px] shrink-0 flex flex-col gap-1.5">
        <section className="h-[216px] bg-[#232323]">
            <div className="flex pl-4 text-[19px] leading-6">
                <Tab active className="w-[73px] pl-[3px]">信息<Lines className="ml-auto text-[#b4b4b4]" /></Tab>
                <Tab className="ml-[34px]">预览</Tab>
                <Tab className="ml-[65px]">对齐</Tab>
                <Tab className="ml-[66px]">音频</Tab>
                <Sep className="mt-1 ml-[22px] h-9" />
                <button aria-label="More panels" className="ml-auto mr-1"><Chevrons /></button>
            </div>
            <div className="flex mt-[9px] ml-3 text-[15px] leading-5 text-[#8c8c8c]">
                <div className="w-[30px] h-[30px] mt-[19px] bg-white border border-black"></div>
                <div className="ml-2 w-[102px]">
                    <Reading name="R" value="255" />
                    <Reading name="G" value="255" />
                    <Reading name="B" value="255" />
                    <Reading name="A" value="255" />
                </div>
                <div className="w-px h-[74px] mt-1 bg-[#2e2e2e]"></div>
                <Svg w={14} h={14} className="mt-9 ml-3.5 text-[#a0a0a0]"><path d="M6 0h2v14H6zM0 6h14v2H0z" /></Svg>
                <div className="ml-1.5">
                    <div className="flex"><span className="w-[23px] font-[Liberation_Mono]">X:</span>790</div>
                    <div className="flex"><span className="w-[26px] font-[Liberation_Mono]">Y:</span>84</div>
                </div>
            </div>
            <div className="mt-2 ml-2 h-[2px] bg-[#2c2c2c]"></div>
        </section>
        <section className="flex-1 bg-[#232323]">
            <div className="flex pl-[19px] text-xl leading-6">
                <Tab className="text-[#b4b4b4]">属性: 无选择项<Lines className="ml-3.5 text-[#b4b4b4]" /></Tab>
            </div>
        </section>
    </div>
);

const effects = [
    'Blur & Sharpen', 'Boris FX Mocha', 'Channel', 'Cinema 4D', 'Color Correction', 'Distort', 'Generate', 'JAe Tools', 'Keying',
    'Obsolete', 'Perspective', 'Plugin Everything', 'RE:Vision Plug-ins', 'RG Magic Bullet', 'Sapphire Adjust', 'Sapphire Blur+Sharpen', 'Sapphire Builder',
];

const EffectRow = ({ children }) => (
    <li className="flex-1 basis-0 flex items-center gap-2 pl-[9px] pt-0.5 border-b border-[#212121] whitespace-nowrap"><Caret /><span>{children}</span></li>
);

const EffectsPanel = () => (
    <section className="w-[311px] shrink-0 bg-[#232323] flex flex-col">
        <div className="flex pl-4 text-xl leading-6">
            <Tab active className="w-[133px] pl-[3px]">效果和预设<Lines className="ml-auto text-[#b4b4b4]" /></Tab>
            <Tab className="ml-[34px]">库</Tab>
        </div>
        <label className="mt-[7px] ml-[9px] mr-2 h-7 rounded bg-[#161616] border border-[#2c2c2c] flex items-center pl-1.5">
            <SearchIcon />
            <input aria-label="Search effects" className="flex-1 min-w-0 bg-transparent outline-none" />
        </label>
        <div className="flex-1 min-h-0 flex mt-[5px]">
            <div className="flex-1 flex flex-col">
                <ul className="flex-1 flex flex-col pt-px pb-1.5 bg-[#262626] font-[Liberation_Mono] text-[13px] leading-5 text-[#bdbdbd]">
                    <EffectRow>* <span className="font-[Noto_Sans_CJK_SC] text-base leading-5">动画预设</span></EffectRow>
                    <EffectRow>3D <span className="font-[Noto_Sans_CJK_SC] text-base leading-5">通道</span></EffectRow>
                    {effects.map((e) => <EffectRow key={e}>{e}</EffectRow>)}
                </ul>
                <div className="h-[26px] border-t-2 border-r-2 border-black flex items-center justify-end pr-2.5">
                    <button aria-label="New preset">
                        <Svg w={18} h={17} className="text-[#b4b4b4]"><path d="M0 0h18v17H9V9H0z" /><path d="M0 11h7v6z" /></Svg>
                    </button>
                </div>
            </div>
            <div className="w-[25px] mb-6 bg-[#1c1c1c] pt-0.5 px-px"><div className="h-[184px] rounded-full bg-[#323232]"></div></div>
        </div>
    </section>
);

const marks = [0, 30, 60, 90, 120, 150, 180, 210, 240, 270, 300];
const DURATION = 318;

const stamp = (f) => (f === 0 ? '00f' : `0${Math.floor(f / 60)}:${f % 60 === 0 ? '00' : '30'}f`);

const Ruler = () => (
    <div className="flex-1 min-w-0 border-l border-black/60 flex flex-col">
        <div className="mt-3 h-3 pl-px flex gap-px shrink-0">
            <div className="w-2.5 rounded-l-full bg-[#2d8ceb]"></div>
            <div className="flex-1 bg-[#666] outline outline-black"></div>
            <div className="w-2.5 rounded-r-full bg-[#2d8ceb]"></div>
        </div>
        <div className="relative h-8 ml-3 mr-[11px] shrink-0 font-[Liberation_Mono] text-[13px] leading-4 text-[#b4b4b4]">
            {marks.map((f) => (
                <div key={f} className={`absolute inset-y-0 flex flex-col ${f === 0 ? "" : "-translate-x-1/2 items-center"}`} style={{ left: `${(f / DURATION) * 100}%` }}>
                    <span className="mt-[7px]">{stamp(f)}</span>
                    {f > 0 && <span className={`w-px mt-auto bg-[#8c8c8c] ${f % 60 === 0 ? "h-[9px]" : "h-[7px]"}`}></span>}
                </div>
            ))}
            <Svg w={18} h={22} className="absolute -left-[9px] top-2.5 z-10 text-[#2d8ceb]">
                <path d="M0 0h18v9l-9 13L0 9z" />
                <path d="M9 9v13" stroke="#232323" strokeWidth="1.500" />
            </Svg>
        </div>
        <div className="h-[23px] pl-px flex gap-px shrink-0">
            <div className="w-2.5 rounded-l-lg border-l-2 border-[#232323] bg-[#2d8ceb]"></div>
            <div className="flex-1 bg-[#606060] outline outline-black border-b-2 border-[#484848]"></div>
            <div className="w-2.5 rounded-r-lg border-r-2 border-[#232323] bg-[#2d8ceb]"></div>
        </div>
        <div className="relative flex-1 mt-0.5 ml-3 mr-[11px] border-t-[5px] border-[#0fc41f] bg-[#303030]">
            <div className="absolute -left-px -top-7 bottom-0 w-[2px] bg-[#2d8ceb]"></div>
            <div className="absolute left-px top-0 bottom-0 w-1 bg-[#4a4a4a]"></div>
        </div>
    </div>
);

const HeadCell = ({ className = "", children }) => (
    <div className={`h-6 flex items-center border-r-2 border-[#171717] whitespace-nowrap ${className}`}>{children}</div>
);

const TimelinePanel = () => (
    <section className="flex-1 min-w-0 bg-[#232323] border border-[#2d8ceb] flex flex-col">
        <div className="flex pl-10 -mt-px text-xl leading-6">
            <Tab>渲染队列</Tab>
            <Tab active className="ml-[58px] w-[113px]">
                <Svg w={9} h={9} className="text-[#a0a0a0]"><path d="M1 1l7 7M8 1L1 8" stroke="currentColor" strokeWidth="1.500" /></Svg>
                <span className="w-[15px] h-[15px] -mt-1.5 ml-[13px] bg-[#a89678]"></span>
                <span className="ml-[18px] text-base leading-6">flag</span>
                <Lines className="ml-auto text-[#b4b4b4]" />
            </Tab>
        </div>
        <div className="flex-1 min-h-0 flex">
            <div className="w-[1047px] shrink-0 flex flex-col">
                <div className="h-[57px] flex items-start text-[#b4b4b4]">
                    <div className="ml-4 mt-1.5 w-[134px]">
                        <div className="pl-[17px] text-[23px] leading-7 font-semibold text-[#2d8ceb]">0:00:00:00</div>
                        <div className="font-[Liberation_Mono] text-[13px] leading-[18px] text-[#1a5591] whitespace-nowrap">00000 (60.00 fps)</div>
                    </div>
                    <label className="ml-8 mt-[15px] w-[614px] h-7 rounded bg-[#161616] border border-[#2c2c2c] flex items-center pl-2">
                        <SearchIcon />
                        <input aria-label="Search layers" className="flex-1 bg-transparent outline-none" />
                    </label>
                    <button aria-label="Mini flowchart" className="ml-6 mt-5">
                        <Svg w={26} h={20}><path d="M0 2l4-2v4zM4 0h6v4H4zM16 0h7v4h-7zM16 8h7v4h-7zM18 15h8l-4 4z" /><path d="M3 2h14M13 2v8h4" fill="none" stroke="currentColor" strokeWidth="1.500" /></Svg>
                    </button>
                    <button aria-label="Hide shy layers" className="ml-[23px] mt-[19px] w-6 h-[19px] bg-[linear-gradient(transparent_60%,#13385f_60%)] text-[#2d8ceb]"><Shy /></button>
                    <button aria-label="Frame blending" className="ml-[17px] mt-[18px]"><Film /></button>
                    <button aria-label="Motion blur" className="ml-[17px] mt-[18px] text-[#2d8ceb]"><Blur fill="#13385f" /></button>
                    <button aria-label="Graph editor" className="ml-[27px] mt-[17px]">
                        <Svg w={25} h={23}><path d="M3 4h21v18H3zM7 0v3M11 0v3M15 0v3M19 0v3M0 7h3M0 11h3M0 15h3M0 19h3M6 8c10 0 5 10 15 11" fill="none" stroke="currentColor" strokeWidth="1.700" /></Svg>
                    </button>
                </div>
                <div className="h-[30px] bg-[#262626] border-y border-[#1f1f1f] flex items-center text-[#a8a8a8] text-xl leading-6">
                    <HeadCell className="w-[102px] pl-2 gap-1 text-[#b4b4b4]">
                        <FaEye size={17} /><FaVolumeUp size={19} />
                        <Svg w={12} h={12} className="mx-[3px]"><circle cx="6" cy="6" r="6" /></Svg>
                        <FaLock size={16} />
                    </HeadCell>
                    <HeadCell className="w-[49px] pl-5 text-[#b4b4b4]"><FaTag size={18} /></HeadCell>
                    <HeadCell className="w-[49px] pl-2 text-base">#</HeadCell>
                    <HeadCell className="w-[194px] pl-2.5">图层名称</HeadCell>
                    <HeadCell className="w-[206px] pl-[7px] gap-0.5 text-[#b4b4b4]">
                        <Svg w={20} h={18}><path d="M4 7a6 6 0 0 1 12 0v5h4v2h-8v3H8v-3H0v-2h4z" /><path d="M6.500 6H9v3H6.500zM11 6h2.500v3H11z" fill="#262626" /></Svg>
                        <Svg w={20} h={18}><circle cx="10" cy="9" r="3" fill="none" stroke="currentColor" strokeWidth="1.600" /><path d="M10 1v3M10 14v3M2 9h3M15 9h3M4.500 3.500l2 2M13.500 12.500l2 2M15.500 3.500l-2 2M6.500 12.500l-2 2" stroke="currentColor" strokeWidth="1.600" /></Svg>
                        <Svg w={20} h={18}><path d="M2 2l8 8M11 11l2 2M15 15l2 2" stroke="currentColor" strokeWidth="2.200" /></Svg>
                        <span className="w-5 text-center font-[Liberation_Serif] italic text-xl leading-5">fx</span>
                        <Film />
                        <Blur />
                        <Svg w={20} h={18}><circle cx="10" cy="9" r="7.500" fill="none" stroke="currentColor" strokeWidth="1.600" /><path d="M15.500 3.500a8 8 0 0 1-11 11z" /></Svg>
                        <Svg w={20} h={18}><path d="M10 2l6.500 3v7.500L10 16l-6.500-3.500V5zM3.500 5l6.500 3.500L16.500 5M10 8.500V16" fill="none" stroke="currentColor" strokeWidth="1.600" /></Svg>
                    </HeadCell>
                    <HeadCell className="w-[249px] pl-2">
                        模式<span className="w-16 text-center text-base pl-6">T</span>
                        轨道遮罩
                        <Svg w={17} h={17} className="ml-auto text-[#b4b4b4]"><path d="M0 0h17v17H0z" /><circle cx="8.500" cy="8.500" r="5.500" fill="#262626" /></Svg>
                        <Svg w={17} h={17} className="ml-[5px] mr-1 text-[#b4b4b4]"><path d="M0 0h17L0 17z" /><path d="M4.500 12.500a5.500 5.500 0 0 1 8-8z" fill="#161616" /><path d="M4.500 12.500a5.500 5.500 0 0 0 8-8z" /></Svg>
                    </HeadCell>
                    <HeadCell className="w-[176px] pl-2">父级和链接</HeadCell>
                </div>
            </div>
            <Ruler />
            <div className="w-6 shrink-0 pt-[58px] flex flex-col items-end gap-2 text-[#b4b4b4]">
                <Svg w={18} h={22}><path d="M0 0h18v13l-9 9-9-9z" /></Svg>
                <Svg w={22} h={20}><path d="M10 4h12v11h-9z" /><path d="M9 12L12 1 1 12z" fill="#232323" stroke="currentColor" strokeWidth="1.500" /><circle cx="9" cy="14" r="4.500" fill="#232323" stroke="currentColor" strokeWidth="1.500" /></Svg>
            </div>
        </div>
        <div className="h-[26px] flex text-xl leading-6 text-[#a8a8a8]">
            <div className="w-[1209px] pt-0.5 border-t-2 border-black flex items-center">
                <div className="flex items-center gap-2.5 pl-2.5 text-[#b4b4b4]">
                    <button aria-label="Layer switches" className="text-[#2d8ceb]">
                        <Svg w={18} h={18}><path d="M4 12H1V1h11v2M7 15H4V4h11v3" fill="none" stroke="currentColor" strokeWidth="1.600" /><path d="M7 7h10v10H7z" fill="none" stroke="currentColor" strokeWidth="1.600" /><circle cx="12" cy="12" r="1.500" /></Svg>
                    </button>
                    <button aria-label="Transfer controls" className="text-[#2d8ceb]">
                        <Svg w={18} h={18}><circle cx="6.500" cy="6.500" r="5.500" fill="none" stroke="currentColor" strokeWidth="1.600" /><path d="M7 8h10v9H7z" fill="none" stroke="currentColor" strokeWidth="1.600" /><path d="M7 8h5q-1 4-5 4z" /></Svg>
                    </button>
                    <button aria-label="In out panes">
                        <Svg w={18} h={18}><path d="M7 0v18H4v-6L1 9l3-3V0zM11 0v18h3v-6l3-3-3-3V0z" /><path d="M5 2v14M13 2v14" stroke="#232323" /></Svg>
                    </button>
                    <button aria-label="Render time">
                        <Svg w={20} h={18}><circle cx="7" cy="8" r="6.500" /><path d="M0 15h14q2-1 1-6h3q1 8-3 8H0z" /><path d="M15 10l-1-5M17 10l2-6" stroke="currentColor" strokeWidth="1.500" /></Svg>
                    </button>
                </div>
                <span className="ml-[43px]">帧渲染时间</span>
                <span className="ml-3 text-[#57d9a3]">5毫秒</span>
                <div className="ml-auto mr-1.5 flex items-center text-[#b4b4b4]">
                    <Svg w={15} h={8}><path d="M0 8l4-5 2 2 3-5 6 8z" /></Svg>
                    <input
                        type="range"
                        aria-label="Timeline zoom"
                        defaultValue="0"
                        className="ml-[15px] mr-[19px] w-[73px] h-4 appearance-none bg-transparent [&::-webkit-slider-runnable-track]:h-[3px] [&::-webkit-slider-runnable-track]:bg-[#454545] [&::-webkit-slider-thumb]:appearance-none [&::-webkit-slider-thumb]:w-4 [&::-webkit-slider-thumb]:h-4 [&::-webkit-slider-thumb]:-mt-1.5 [&::-webkit-slider-thumb]:rounded-full [&::-webkit-slider-thumb]:border-[3px] [&::-webkit-slider-thumb]:border-[#929292] [&::-webkit-slider-thumb]:bg-[#232323]"
                    />
                    <Svg w={24} h={12}><path d="M0 12l6-8 2 2-4 6zM6 12l8-12 10 12z" /></Svg>
                </div>
            </div>
        </div>
    </section>
);

const App = () => {
    return (
        <div className="h-screen min-h-[900px] flex flex-col overflow-hidden bg-[#171717] font-['Noto_Sans','Noto_Sans_CJK_SC',sans-serif]">
            <TitleBar />
            <Toolbar />
            <main className="flex-1 min-h-0 flex flex-col gap-[7px] pt-[3px] pb-0.5">
                <div className="flex-[818] min-h-0 flex gap-1.5 px-0.5">
                    <ProjectPanel />
                    <CompPanel />
                    <MotionPanel />
                    <InfoColumn />
                </div>
                <div className="flex-[596] min-h-0 flex gap-1.5 pl-0.5 pr-px">
                    <EffectsPanel />
                    <TimelinePanel />
                </div>
            </main>
            <footer className="h-[11px] border-t-[3px] border-[#514a9a] bg-[linear-gradient(to_right,#2a2f9c,#38288a_20%,#33268a_40%,#3a3596_60%,#2f2a8c)]">
                <div className="ml-[153px] mt-px w-[58px] h-2 rounded-t-lg bg-white/10"></div>
            </footer>
        </div>
    );
};

export default App;
